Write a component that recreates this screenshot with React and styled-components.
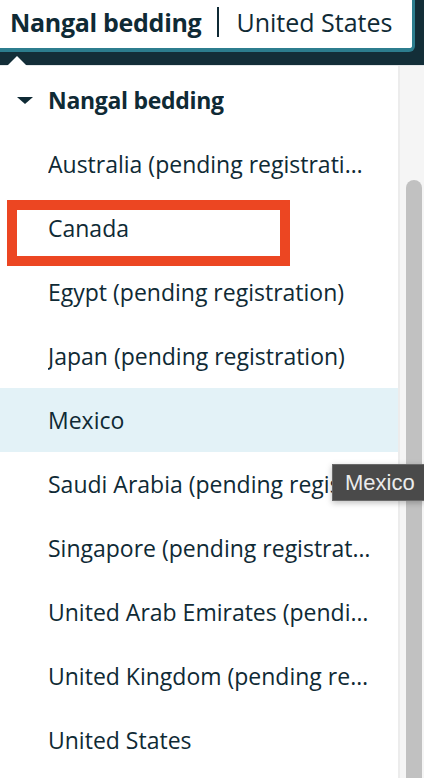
import React from 'react'
import styled, { createGlobalStyle } from 'styled-components'

const GlobalStyle = createGlobalStyle`
  html, body {
    margin: 0;
    padding: 0;
    background: #ffffff;
  }
  body {
    font-family: "Open Sans", "Noto Sans", Arial, sans-serif;
    color: #0f2a35;
  }
`

const Page = styled.div`
  width: 424px;
  height: 778px;
  overflow: hidden;
  display: flex;
  flex-direction: column;
`

const TopBar = styled.div`
  height: 66px;
  flex-shrink: 0;
  background: #132e38;
  display: flex;
  align-items: flex-start;
  position: relative;
  border-bottom: 1px solid #e3e6e8;
  box-sizing: border-box;
`

const SwitchButton = styled.div`
  width: 415px;
  height: 52px;
  box-sizing: border-box;
  background: #ffffff;
  border-right: 3px solid #2c7d8e;
  border-bottom: 4px solid #2c7d8e;
  border-bottom-right-radius: 6px;
  display: flex;
  align-items: center;
  padding: 0 0 4px 10px;
  font-size: 25px;
  white-space: nowrap;
  overflow: hidden;
`

const AccountName = styled.span`
  font-weight: 700;
  letter-spacing: -0.3px;
`

const Divider = styled.span`
  width: 2px;
  height: 30px;
  flex-shrink: 0;
  background: #0f2a35;
  margin: 0 17px 0 16px;
`

const Caret = styled.span`
  position: absolute;
  left: 7px;
  bottom: -1px;
  width: 0;
  height: 0;
  border-left: 10px solid transparent;
  border-right: 10px solid transparent;
  border-bottom: 10px solid #ffffff;
`

const Body = styled.div`
  flex: 1;
  display: flex;
  min-height: 0;
  position: relative;
`

const List = styled.div`
  flex: 1;
  min-width: 0;
  display: flex;
  flex-direction: column;
  padding-top: 2px;
`

const Row = styled.div`
  height: 64px;
  flex-shrink: 0;
  display: flex;
  align-items: center;
  padding: 0 23px 0 ${p => (p.$group ? 17 : 48)}px;
  background: ${p => (p.$hover ? '#e3f2f7' : 'transparent')};
  font-size: 23px;
  font-weight: ${p => (p.$group ? 700 : 400)};
  letter-spacing: ${p => (p.$group ? '-0.3px' : '0')};
`

const Label = styled.span`
  white-space: nowrap;
  overflow: hidden;
  text-overflow: ellipsis;
  min-width: 0;
`

const Triangle = styled.span`
  width: 0;
  height: 0;
  border-left: 8px solid transparent;
  border-right: 8px solid transparent;
  border-top: 7px solid #0f2a35;
  margin-right: 15px;
  flex-shrink: 0;
`

const Highlight = styled.div`
  position: absolute;
  left: 7px;
  top: 134px;
  width: 283px;
  height: 66px;
  box-sizing: border-box;
  border: 10px solid #ec4622;
  pointer-events: none;
`

const Track = styled.div`
  width: 26px;
  flex-shrink: 0;
  background: #f5f5f5;
  border-left: 2px solid #ececec;
  box-sizing: border-box;
  position: relative;
`

const Thumb = styled.div`
  position: absolute;
  left: 6px;
  right: 2px;
  top: 114px;
  bottom: -20px;
  background: #c1c1c1;
  border-radius: 8px;
`

const Tooltip = styled.div`
  position: absolute;
  left: 332px;
  top: 398px;
  height: 37px;
  padding: 0 10px 0 12px;
  box-sizing: border-box;
  background: #4a4a4a;
  border: 1px solid #6a6a6a;
  border-right: none;
  color: #ececec;
  font-family: "Liberation Sans", Arial, sans-serif;
  font-size: 22px;
  display: flex;
  align-items: center;
  white-space: nowrap;
  box-shadow: 0 2px 6px rgba(0, 0, 0, 0.25);
`

const countries = [
  'Australia (pending registration)',
  'Canada',
  'Egypt (pending registration)',
  'Japan (pending registration)',
  'Mexico',
  'Saudi Arabia (pending registration)',
  'Singapore (pending registration)',
  'United Arab Emirates (pending registration)',
  'United Kingdom (pending registration)',
  'United States',
]

export default function App() {
  return (
    <Page>
      <GlobalStyle />
      <TopBar>
        <SwitchButton>
          <AccountName>Nangal bedding</AccountName>
          <Divider />
          <span>United States</span>
        </SwitchButton>
        <Caret />
      </TopBar>
      <Body>
        <List>
          <Row $group>
            <Triangle />
            <Label>Nangal bedding</Label>
          </Row>
          {countries.map(c => (
            <Row key={c} $hover={c === 'Mexico'}>
              <Label>{c}</Label>
            </Row>
          ))}
        </List>
        <Track>
          <Thumb />
        </Track>
        <Highlight />
        <Tooltip>Mexico</Tooltip>
      </Body>
    </Page>
  )
}
